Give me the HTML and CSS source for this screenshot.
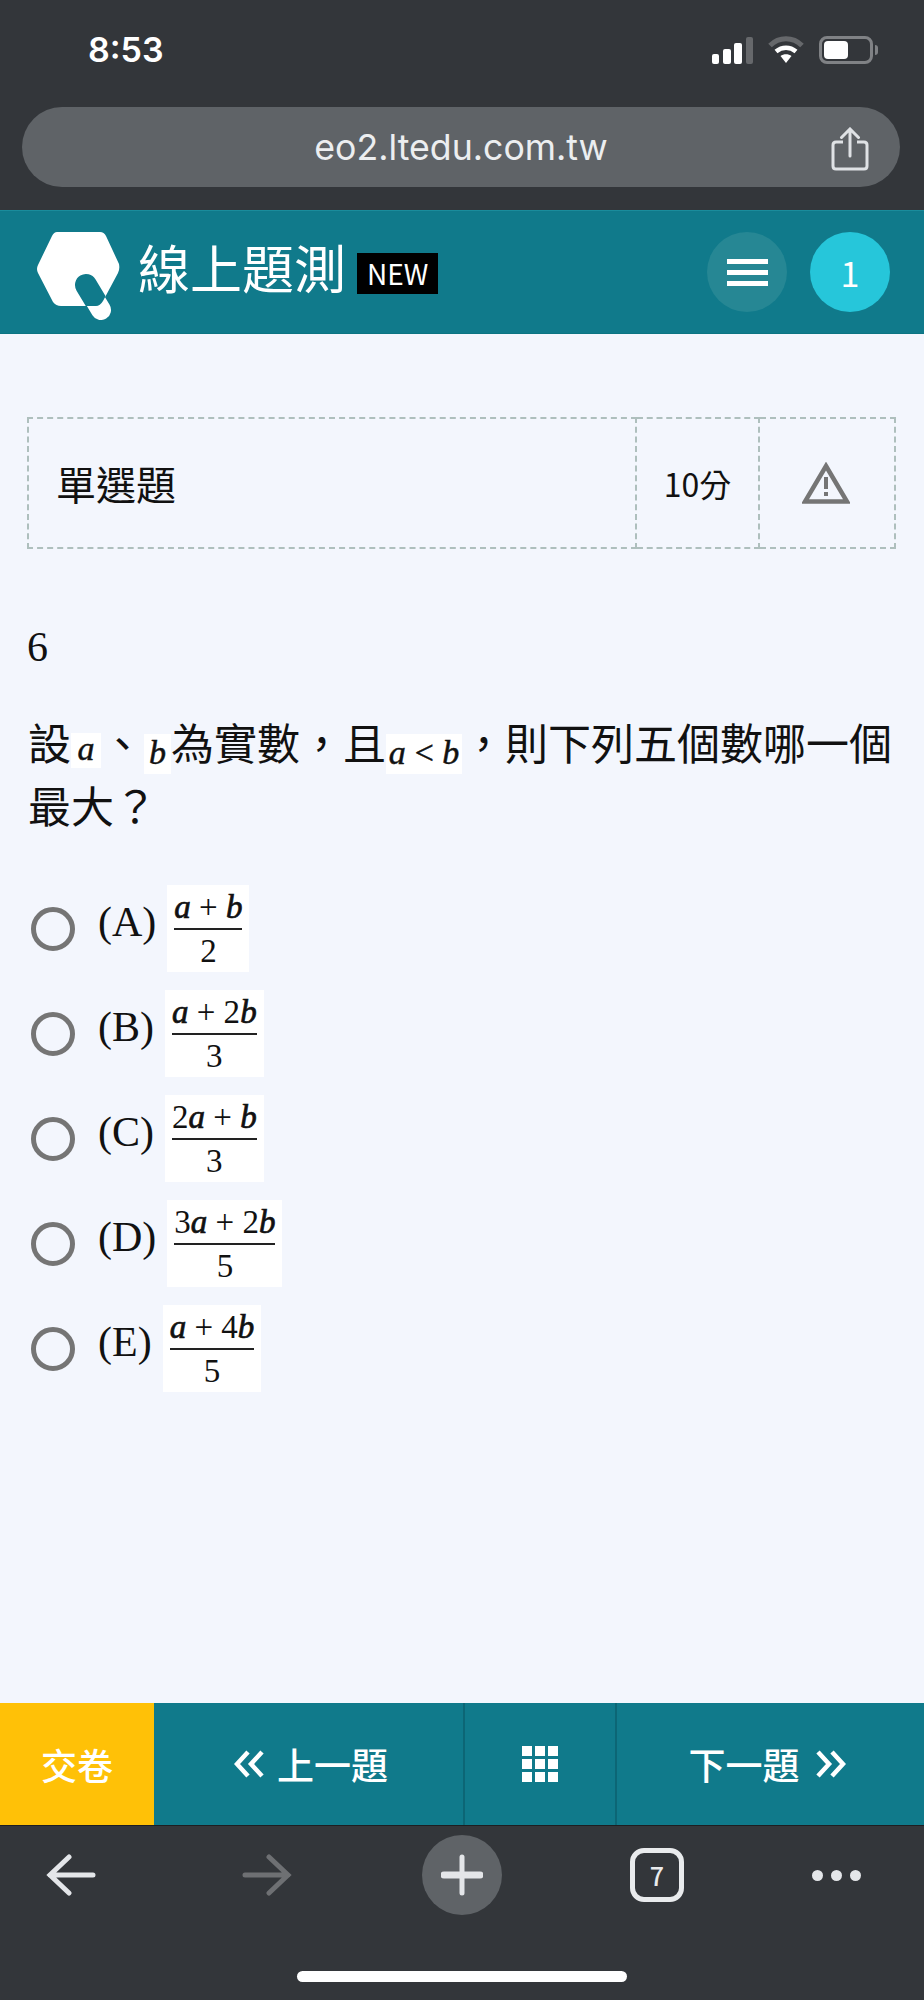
FILE: index.html
```html
<!doctype html>
<html lang="zh-Hant">
<head>
<meta charset="utf-8">
<meta name="viewport" content="width=device-width, initial-scale=1.0">
<link rel="stylesheet" href="styles.css">
<title>線上題測</title>
</head>
<body>

<div class="chrome-top">
    <div class="status">
        <span class="time">8:53</span>
        <div class="status-icons">
            <svg class="signal" width="41" height="27" viewBox="0 0 41 27">
                <rect x="0" y="17" width="7" height="10" rx="2" fill="#fff"/>
                <rect x="11" y="12" width="8" height="15" rx="2" fill="#fff"/>
                <rect x="22" y="6" width="8" height="21" rx="2" fill="#fff"/>
                <rect x="34" y="0" width="7" height="27" rx="2" fill="#66686b"/>
            </svg>
            <svg class="wifi" width="36" height="28" viewBox="0 0 36 28">
                <path d="M2 9.5 C11 0.5 25 0.5 34 9.5" fill="none" stroke="#66686b" stroke-width="5"/>
                <path d="M8 15.5 C14 10.5 22 10.5 28 15.5" fill="none" stroke="#fff" stroke-width="4.5"/>
                <path d="M12.5 20 C15.5 17.5 20.500 17.500 23.5 20 L18 27 Z" fill="#fff"/>
            </svg>
            <div class="battery"><span class="battery-level"></span></div>
            <span class="battery-tip"></span>
        </div>
    </div>
    <div class="urlbar">
        <span class="url">eo2.ltedu.com.tw</span>
        <svg class="share" width="38" height="44" viewBox="0 0 38 44" fill="none" stroke="#dfe2e5" stroke-width="3">
            <path d="M12 15 H5 Q2 15 2 18 V39 Q2 42 5 42 H33 Q36 42 36 39 V18 Q36 15 33 15 H26"/>
            <path d="M19 29 V3 M10.500 10.500 L19 2 L27.500 10.500" stroke-linecap="round"/>
        </svg>
    </div>
</div>

<header class="topbar">
    <svg class="logo" width="83" height="88" viewBox="0 0 83 88">
        <clipPath id="logo-clip"><path d="M20 0 H63 Q67 0 69 4 L82 32 Q83 37 81 41 L66 69 Q63 74 59 74 H24 Q19 74 16 70 L1 41 Q-1 37 1 33 L15 4 Q17 0 20 0 Z"/></clipPath>
        <line x1="49" y1="53" x2="64" y2="78" stroke="#fff" stroke-width="20" stroke-linecap="round"/>
        <path d="M20 0 H63 Q67 0 69 4 L82 32 Q83 37 81 41 L66 69 Q63 74 59 74 H24 Q19 74 16 70 L1 41 Q-1 37 1 33 L15 4 Q17 0 20 0 Z" fill="#fff"/>
        <line x1="49" y1="53" x2="64" y2="78" stroke="#107a8b" stroke-width="22" stroke-linecap="round" clip-path="url(#logo-clip)"/>
    </svg>
    <h1 class="brand">線上題測</h1>
    <span class="new-tag">NEW</span>
    <div class="topbar-btns">
        <button class="round-btn menu-btn"><span></span><span></span><span></span></button>
        <button class="round-btn count-btn">1</button>
    </div>
</header>

<main class="content">
    <table class="qinfo">
        <tr>
            <td class="qtype">單選題</td>
            <td class="qscore">10分</td>
            <td class="qwarn">
                <svg width="48" height="42" viewBox="0 0 48 42">
                    <path d="M24 4 L45 39.500 H3 Z" fill="none" stroke="#757575" stroke-width="4.500"/>
                    <rect x="22" y="15" width="4" height="12" fill="#757575"/>
                    <rect x="22" y="30" width="4" height="4" fill="#757575"/>
                </svg>
            </td>
        </tr>
    </table>

    <div class="qnum">6</div>

    <p class="qtext">設<span class="mi mi-a">a</span>、<span class="mi mi-b">b</span>為實數，且<span class="mi mi-ab">a&thinsp;&lt;&thinsp;b</span>，則下列五個數哪一個最大？</p>

    <ul class="options">
        <li class="option">
            <span class="radio"></span>
            <span class="opt-label">(A)</span>
            <span class="frac"><span class="num"><i>a</i> + <i>b</i></span><span class="den">2</span></span>
        </li>
        <li class="option">
            <span class="radio"></span>
            <span class="opt-label">(B)</span>
            <span class="frac"><span class="num"><i>a</i> + 2<i>b</i></span><span class="den">3</span></span>
        </li>
        <li class="option">
            <span class="radio"></span>
            <span class="opt-label">(C)</span>
            <span class="frac"><span class="num">2<i>a</i> + <i>b</i></span><span class="den">3</span></span>
        </li>
        <li class="option">
            <span class="radio"></span>
            <span class="opt-label">(D)</span>
            <span class="frac"><span class="num">3<i>a</i> + 2<i>b</i></span><span class="den">5</span></span>
        </li>
        <li class="option">
            <span class="radio"></span>
            <span class="opt-label">(E)</span>
            <span class="frac"><span class="num"><i>a</i> + 4<i>b</i></span><span class="den">5</span></span>
        </li>
    </ul>
</main>

<nav class="examnav">
    <a class="nav-submit">交卷</a>
    <a class="nav-item nav-prev">
        <svg width="30" height="28" viewBox="0 0 30 28" fill="none" stroke="#fff" stroke-width="4.500"><path d="M14 2 L3 14 L14 26 M28 2 L17 14 L28 26"/></svg>
        上一題
    </a>
    <a class="nav-item nav-grid">
        <span class="grid-icon"><i></i><i></i><i></i><i></i><i></i><i></i><i></i><i></i><i></i></span>
    </a>
    <a class="nav-item nav-next">
        下一題
        <svg width="30" height="28" viewBox="0 0 30 28" fill="none" stroke="#fff" stroke-width="4.500"><path d="M2 2 L13 14 L2 26 M16 2 L27 14 L16 26"/></svg>
    </a>
</nav>

<div class="chrome-bottom">
    <div class="toolbar">
        <svg class="tool-back" width="50" height="42" viewBox="0 0 50 42" fill="none" stroke="#e4e6e9" stroke-width="5" stroke-linecap="round"><path d="M47 21 H4 M23 3 L4 21 L23 39"/></svg>
        <svg width="50" height="42" viewBox="0 0 50 42" fill="none" stroke="#6e7073" stroke-width="5" stroke-linecap="round"><path d="M3 21 H46 M27 3 L46 21 L27 39"/></svg>
        <div class="plus-btn">
            <svg width="42" height="42" viewBox="0 0 42 42" fill="none" stroke="#e4e6e9" stroke-linecap="round"><path d="M21 3 V39" stroke-width="5"/><path d="M3 21 H39" stroke-width="7"/></svg>
        </div>
        <div class="tabs-btn">7</div>
        <div class="more-btn"><span></span><span></span><span></span></div>
    </div>
    <div class="home-bar"></div>
</div>

</body>
</html>
```

FILE: styles.css
```css
* {
    box-sizing: border-box;
}
html, body {
    margin: 0;
    padding: 0;
}
body {
    width: 924px;
    height: 2000px;
    display: flex;
    flex-direction: column;
    overflow: hidden;
    background: #f3f6fd;
    color: #111;
    font-family: "Noto Sans CJK TC", "Noto Sans", sans-serif;
}

/* browser chrome, top */
.chrome-top {
    height: 210px;
    background: #33363a;
    padding: 0 24px 0 22px;
    display: flex;
    flex-direction: column;
}
.status {
    height: 107px;
    display: flex;
    align-items: flex-start;
    justify-content: space-between;
    padding: 28px 22px 0 66px;
}
.time {
    font-family: Inter, Roboto, sans-serif;
    font-weight: 600;
    font-size: 34px;
    line-height: 44px;
    color: #fff;
}
.status-icons {
    display: flex;
    align-items: center;
    gap: 15px;
    padding: 8px 0 0 0;
}
.battery {
    width: 54px;
    height: 28px;
    border: 3px solid #808285;
    border-radius: 8px;
    padding: 2px;
}
.battery-level {
    display: block;
    width: 24px;
    height: 100%;
    background: #fff;
    border-radius: 4px;
}
.battery-tip {
    width: 3px;
    height: 10px;
    background: #808285;
    border-radius: 0 3px 3px 0;
    margin-left: -13px;
}
.urlbar {
    height: 80px;
    background: #5f6367;
    border-radius: 40px;
    display: flex;
    align-items: center;
    justify-content: center;
    position: relative;
}
.url {
    font-family: Inter, Roboto, sans-serif;
    font-size: 35.7px;
    color: #eceef0;
}
.share {
    position: absolute;
    right: 31px;
    top: 20px;
}

/* site header */
.topbar {
    height: 124px;
    background: #107a8b;
    border-top: 1px solid #1a8c9c;
    border-bottom: 1px solid #0c7482;
    display: flex;
    align-items: center;
    padding: 0 34px 0 37px;
}
.logo {
    flex: none;
    margin-top: 8px;
}
.brand {
    margin: 0 0 10px 18px;
    font-size: 52px;
    font-weight: 400;
    line-height: 1;
    color: #fff;
}
.new-tag {
    margin: 3px 0 0 11px;
    background: #000;
    color: #fff;
    font-size: 28px;
    line-height: 41px;
    padding: 0 10px;
}
.topbar-btns {
    margin-left: auto;
    display: flex;
    gap: 23px;
}
.round-btn {
    width: 80px;
    height: 80px;
    border: 0;
    border-radius: 50%;
    padding: 0;
    color: #fff;
    font-family: inherit;
}
.menu-btn {
    background: #268794;
    display: flex;
    flex-direction: column;
    align-items: center;
    justify-content: center;
    gap: 6px;
}
.menu-btn span {
    width: 41px;
    height: 5px;
    background: #fff;
}
.count-btn {
    background: #26c6da;
    font-size: 34px;
}

/* question */
.content {
    flex: 1;
    padding: 83px 27px 0 27px;
}
.qinfo {
    width: 869px;
    height: 132px;
    border-collapse: collapse;
    table-layout: fixed;
}
.qinfo td {
    border: 2px dashed #aebfbd;
    padding: 0;
    vertical-align: middle;
}
.qinfo .qtype {
    padding-left: 27px;
    font-size: 40px;
    color: #111;
}
.qscore {
    width: 123px;
    text-align: center;
    font-size: 32px;
}
.qinfo .qwarn {
    width: 136px;
    padding-right: 3px;
    text-align: center;
    line-height: 0;
}
.qnum {
    margin-top: 74px;
    font-family: "Liberation Serif", serif;
    font-size: 42px;
    line-height: 48px;
    color: #111;
}
.qtext {
    margin: 39px 0 0 1px;
    font-size: 43px;
    line-height: 63px;
    color: #111;
}
.mi {
    display: inline-block;
    background: #fff;
    font-family: "Liberation Serif", serif;
    font-style: italic;
    font-size: 34px;
    line-height: 38px;
    height: 40px;
    margin-top: -6px;
    margin-bottom: -6px;
    text-align: center;
    vertical-align: -4px;
    -webkit-text-stroke: 0.5px #111;
}
.mi-a {
    width: 30px;
    height: 35px;
    line-height: 32px;
    vertical-align: 0;
}
.mi-b {
    width: 27px;
}
.mi-ab {
    width: 76px;
}
.options {
    list-style: none;
    margin: 49px 0 0 0;
    padding: 0;
}
.option {
    height: 87px;
    margin-bottom: 18px;
    display: flex;
    align-items: center;
}
.radio {
    flex: none;
    width: 44px;
    height: 44px;
    margin: 0 23px 0 4px;
    border: 5px solid #757575;
    border-radius: 50%;
}
.opt-label {
    font-family: "Liberation Serif", serif;
    font-size: 42px;
    margin: -14px 11px 0 0;
}
.frac {
    display: inline-flex;
    flex-direction: column;
    align-items: stretch;
    background: #fff;
    height: 87px;
    padding: 0 7px;
    font-family: "Liberation Serif", serif;
    font-size: 33px;
    color: #111;
    text-align: center;
}
.frac i {
    -webkit-text-stroke: 0.7px #111;
}
.num {
    height: 45px;
    line-height: 44px;
    border-bottom: 2px solid #222;
    white-space: pre;
}
.den {
    line-height: 42px;
}

/* bottom exam nav */
.examnav {
    height: 122px;
    background: #107a8b;
    display: flex;
    color: #fff;
    font-size: 37px;
    font-weight: 500;
}
.nav-submit {
    width: 154px;
    font-size: 36px;
    background: #ffc107;
    display: flex;
    align-items: center;
    justify-content: center;
}
.nav-item {
    display: flex;
    align-items: center;
    justify-content: center;
    gap: 13px;
}
.nav-prev {
    width: 309px;
    padding-left: 5px;
}
.nav-grid {
    width: 154px;
    border-left: 2px solid #0c6675;
    border-right: 2px solid #0c6675;
}
.nav-next {
    flex: 1;
    gap: 16px;
    padding-right: 7px;
}
.grid-icon {
    display: grid;
    grid-template-columns: repeat(3, 10px);
    grid-auto-rows: 10px;
    gap: 3px;
}
.grid-icon i {
    background: #fff;
}

/* browser chrome, bottom */
.chrome-bottom {
    height: 175px;
    background: #33363a;
    border-top: 1px solid #1d1f22;
    position: relative;
}
.toolbar {
    height: 98px;
    display: flex;
    align-items: center;
    gap: 130px;
    padding: 0 0 0 46px;
}
.tool-back {
    margin-right: 16px;
}
.plus-btn {
    width: 80px;
    height: 80px;
    border-radius: 50%;
    background: #5f6367;
    display: flex;
    align-items: center;
    justify-content: center;
}
.tabs-btn {
    width: 54px;
    height: 54px;
    margin-left: -2px;
    border: 5px solid #e9ebed;
    border-radius: 14px;
    color: #e9ebed;
    font-size: 25px;
    font-weight: 500;
    display: flex;
    align-items: center;
    justify-content: center;
}
.more-btn {
    display: flex;
    gap: 8px;
    margin-left: -2px;
}
.more-btn span {
    width: 11px;
    height: 11px;
    border-radius: 50%;
    background: #e4e6e9;
}
.home-bar {
    position: absolute;
    left: 297px;
    top: 145px;
    width: 330px;
    height: 11px;
    background: #fff;
    border-radius: 6px;
}
```
